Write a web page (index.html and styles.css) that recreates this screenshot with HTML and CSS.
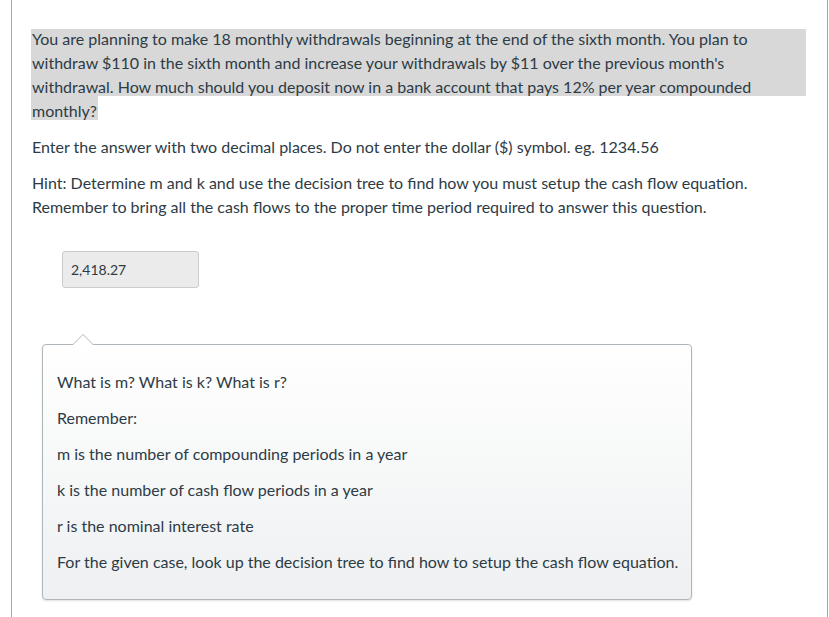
FILE: index.html
```html
<!DOCTYPE html>
<html lang="en">
<head>
    <meta charset="UTF-8">
    <meta name="viewport" content="width=device-width, initial-scale=1.0">
    <title>Question</title>
    <link rel="stylesheet" href="styles.css">
</head>
<body>
    <div class="page">
        <p class="question">You are planning to make 18 monthly withdrawals beginning at the end of the sixth month. You plan to withdraw $110 in the sixth month and increase your withdrawals by $11 over the previous month's withdrawal. How much should you deposit now in a bank account that pays 12% per year compounded monthly?</p>
        <p>Enter the answer with two decimal places. Do not enter the dollar ($) symbol. eg. 1234.56</p>
        <p>Hint: Determine m and k and use the decision tree to find how you must setup the cash flow equation. Remember to bring all the cash flows to the proper time period required to answer this question.</p>

        <div class="answer">2,418.27</div>

        <div class="popover">
            <p>What is m? What is k? What is r?</p>
            <p>Remember:</p>
            <p>m is the number of compounding periods in a year</p>
            <p>k is the number of cash flow periods in a year</p>
            <p>r is the nominal interest rate</p>
            <p>For the given case, look up the decision tree to find how to setup the cash flow equation.</p>
        </div>
    </div>
</body>
</html>
```

FILE: styles.css
```css
*{
    margin: 0;
    padding: 0;
    box-sizing: border-box;
}
body{
    font-family: Lato, "Open Sans", sans-serif;
    font-size: 16px;
    line-height: 24px;
    color: #2d3b45;
    background: #fff;
}
.page{
    margin-left: 11px;
    width: 817px;
    min-height: 617px;
    border-left: 1px solid #a8a8a8;
    border-right: 1px solid #a8a8a8;
    padding: 27px 21px 0 20px;
}
.page p{
    margin-bottom: 12px;
}
/* selected text look */
.page .question{
    margin-left: -1px;
    padding-left: 1px;
    background:
        linear-gradient(#d8d8d8, #d8d8d8) 0 2px / 100% 67px no-repeat,
        linear-gradient(#d8d8d8, #d8d8d8) 0 69px / 67px 24px no-repeat;
}
.answer{
    width: 137px;
    height: 37px;
    margin: 32px 0 0 30px;
    padding: 0 8px;
    border: 1px solid #c7cdd1;
    border-radius: 3px;
    background: #ebebeb;
    font-size: 14px;
    line-height: 35px;
}
.popover{
    position: relative;
    width: 650px;
    margin: 56px 0 0 10px;
    padding: 13px 8px 13px 14px;
    border: 1px solid #aeb6bc;
    border-radius: 4px;
    background: linear-gradient(#ffffff, #eef0f1);
    box-shadow: 0 1px 2px rgba(0, 0, 0, 0.12);
}
.popover p{
    margin: 12px 0;
}
.popover::before,
.popover::after{
    content: "";
    position: absolute;
    left: 30px;
    border: 10px solid transparent;
    border-top: 0;
}
.popover::before{
    top: -11px;
    border-bottom: 10px solid #aeb6bc;
}
.popover::after{
    top: -10px;
    border-bottom: 10px solid #fff;
}
```
